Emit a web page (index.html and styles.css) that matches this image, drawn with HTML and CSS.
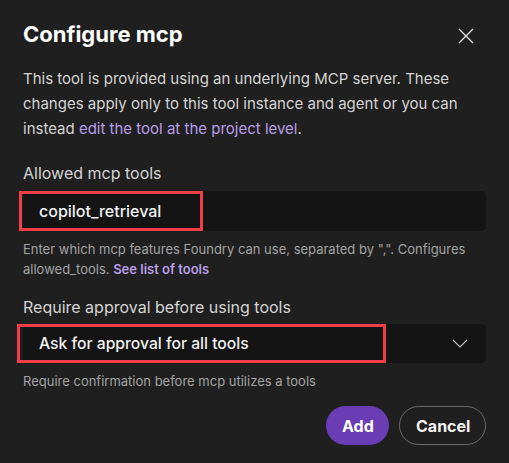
FILE: index.html
```html
<!DOCTYPE html>
<html>
<head>
<meta charset="utf-8">
<link rel="stylesheet" href="styles.css">
</head>
<body>
<div class="dialog">
  <div class="header">
    <h1 class="title">Configure mcp</h1>
    <button class="close" aria-label="Close">
      <svg width="16" height="16" viewBox="0 0 16 16"><path d="M1 1 L15 15 M15 1 L1 15" stroke="#e0e0e0" stroke-width="1.4" fill="none"/></svg>
    </button>
  </div>
  <p class="intro">This tool is provided using an underlying MCP server. These changes apply only to this tool instance and agent or you can instead <a class="link" href="#">edit the tool at the project level</a>.</p>

  <div class="field">
    <label class="label">Allowed mcp tools</label>
    <div class="input">copilot_retrieval</div>
    <p class="hint">Enter which mcp features Foundry can use, separated by ",". Configures allowed_tools. <a class="link strong" href="#">See list of tools</a></p>
  </div>

  <div class="field second">
    <label class="label">Require approval before using tools</label>
    <div class="input select">
      <span>Ask for approval for all tools</span>
      <svg class="chev" width="16" height="9" viewBox="0 0 16 9"><path d="M1 1 L8 8 L15 1" stroke="#bdbdbd" stroke-width="1.2" fill="none"/></svg>
    </div>
    <p class="hint">Require confirmation before mcp utilizes a tools</p>
  </div>

  <div class="actions">
    <button class="btn primary">Add</button>
    <button class="btn secondary">Cancel</button>
  </div>

  <div class="highlight hl-1"></div>
  <div class="highlight hl-2"></div>
</div>
</body>
</html>
```

FILE: styles.css
```css
html, body {
  margin: 0;
  padding: 0;
  background: #1f1f1f;
}
body {
  font-family: Inter, "Noto Sans", "Liberation Sans", sans-serif;
  color: #d6d6d6;
  width: 509px;
  height: 463px;
  overflow: hidden;
}
.dialog {
  position: relative;
  padding: 20px 23px 0 23px;
}
.header {
  display: flex;
  justify-content: space-between;
  align-items: center;
  height: 28px;
}
.title {
  margin: 0;
  font-size: 22px;
  font-weight: 700;
  color: #ffffff;
  line-height: 28px;
  letter-spacing: 0;
}
.close {
  background: none;
  border: 0;
  padding: 0;
  margin-right: 12px;
  margin-top: 4px;
  display: flex;
}
.intro {
  margin: 18px 0 0 0;
  font-size: 15px;
  line-height: 25px;
  color: #d4d4d4;
}
.link {
  color: #b89ee8;
  text-decoration: none;
}
.link.strong {
  font-weight: 600;
}
.field {
  margin-top: 20px;
}
.field.second {
  margin-top: 16px;
}
.label {
  display: block;
  font-size: 16px;
  line-height: 24px;
  color: #d4d4d4;
}
.input {
  margin-top: 6px;
  height: 40px;
  background: #141414;
  border-radius: 5px;
  display: flex;
  align-items: center;
  padding: 0 16px;
  font-size: 16px;
  font-weight: 500;
  color: #f2f2f2;
}
.select {
  margin-top: 5px;
  height: 39px;
  justify-content: space-between;
  font-size: 15.7px;
}
.chev {
  margin-right: 2px;
}
.hint {
  margin: 8px 0 0 0;
  font-size: 13px;
  line-height: 20px;
  color: #a3a3a3;
}
.actions {
  display: flex;
  justify-content: flex-end;
  gap: 10px;
  margin-top: 15px;
}
.btn {
  height: 39px;
  border-radius: 20px;
  font-family: inherit;
  font-size: 16px;
  font-weight: 700;
  padding: 0 16px;
}
.primary {
  background: #6a3db5;
  color: #ffffff;
  border: 0;
  width: 63px;
}
.secondary {
  background: transparent;
  color: #f2f2f2;
  border: 1px solid #6a6a6a;
  width: 87px;
}
.highlight {
  position: absolute;
  border: 3px solid #ef3e47;
  box-sizing: border-box;
  pointer-events: none;
}
.hl-1 {
  left: 19px;
  top: 191px;
  width: 184px;
  height: 40px;
}
.hl-2 {
  left: 17px;
  top: 324px;
  width: 369px;
  height: 39px;
}
```
